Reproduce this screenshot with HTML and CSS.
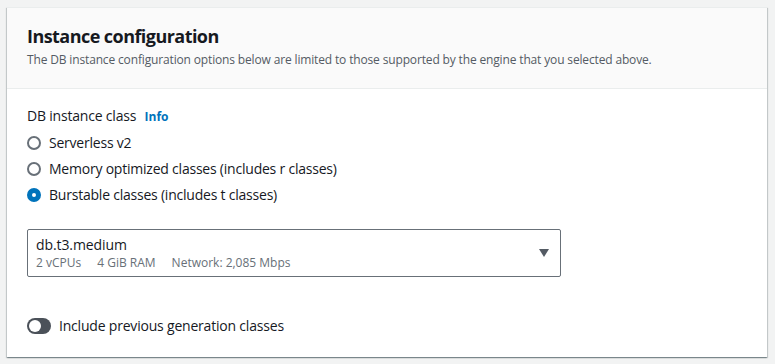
FILE: index.html
```html
<html>
<head>
    <title>Instance configuration</title>
    <link rel="stylesheet" href="styles.css">
</head>

<body>
    <div class="card">
        <div class="card-header">
            <h2>Instance configuration</h2>
            <div class="description">The DB instance configuration options below are limited to those supported by the engine that you selected above.</div>
        </div>
        <div class="card-body">
            <div class="field-label">DB instance class <a class="info">Info</a></div>
            <div class="radio-group">
                <label class="radio"><span class="radio-circle"></span>Serverless v2</label>
                <label class="radio"><span class="radio-circle"></span>Memory optimized classes (includes r classes)</label>
                <label class="radio"><span class="radio-circle checked"></span>Burstable classes (includes t classes)</label>
            </div>
            <div class="select">
                <div class="select-text">
                    <div class="select-value">db.t3.medium</div>
                    <div class="select-tags">
                        <span>2 vCPUs</span>
                        <span>4 GiB RAM</span>
                        <span>Network: 2,085 Mbps</span>
                    </div>
                </div>
                <span class="caret"></span>
            </div>
            <div class="toggle-row">
                <span class="toggle"><span class="knob"></span></span>
                Include previous generation classes
            </div>
        </div>
    </div>
</body>

</html>
```

FILE: styles.css
```css
body {
    margin: 0;
    padding: 7px 8px 7px 7px;
    background-color: #f2f3f3;
    font-family: "Open Sans", sans-serif;
    color: #16191f;
}

.card {
    background-color: #ffffff;
    box-shadow: 0 1px 1px 0 rgba(0, 28, 36, 0.3), 1px 1px 1px 0 rgba(0, 28, 36, 0.15), -1px 1px 1px 0 rgba(0, 28, 36, 0.15);
    border-top: 1px solid #eaeded;
}

.card-header {
    background-color: #fafafa;
    border-bottom: 1px solid #eaeded;
    padding: 16px 20px 20px 20px;
}

h2 {
    margin: 0;
    font-size: 18px;
    font-weight: 700;
    line-height: 24px;
    letter-spacing: -0.55px;
}

.description {
    font-size: 12px;
    line-height: 16px;
    color: #545b64;
    margin-top: 4px;
    letter-spacing: -0.15px;
}

.card-body {
    padding: 16px 20px 20px 20px;
}

.field-label {
    font-size: 14px;
    line-height: 22px;
    letter-spacing: -0.2px;
}

.info {
    color: #0073bb;
    font-weight: 700;
    font-size: 12px;
    margin-left: 5px;
    letter-spacing: 0;
}

.radio-group {
    display: flex;
    flex-direction: column;
    gap: 4px;
    margin-top: 4px;
}

.radio {
    display: flex;
    align-items: center;
    gap: 8px;
    font-size: 14px;
    line-height: 22px;
    letter-spacing: -0.22px;
}

.radio-circle {
    width: 10px;
    height: 10px;
    border: 2px solid #687078;
    border-radius: 50%;
    background: #fff;
}

.radio-circle.checked {
    width: 4px;
    height: 4px;
    border: 5px solid #0073bb;
}

.select {
    margin-top: 23px;
    width: 534px;
    box-sizing: border-box;
    border: 1px solid #687078;
    border-radius: 2px;
    padding: 5px 11px 5px 8px;
    display: flex;
    align-items: center;
    justify-content: space-between;
}

.select-value {
    font-size: 14px;
    line-height: 20px;
    letter-spacing: -0.1px;
}

.select-tags {
    font-size: 12px;
    line-height: 16px;
    color: #687078;
    display: flex;
    gap: 16px;
}

.caret {
    width: 0;
    height: 0;
    border-left: 5px solid transparent;
    border-right: 5px solid transparent;
    border-top: 8px solid #545b64;
}

.toggle-row {
    margin-top: 38px;
    display: flex;
    align-items: center;
    gap: 8px;
    font-size: 14px;
    line-height: 22px;
    letter-spacing: -0.2px;
}

.toggle {
    width: 24px;
    height: 16px;
    border-radius: 8px;
    background-color: #4b5159;
    display: flex;
    align-items: center;
    padding: 0 2px;
    box-sizing: border-box;
}

.knob {
    width: 12px;
    height: 12px;
    border-radius: 50%;
    background: #fff;
}
```
